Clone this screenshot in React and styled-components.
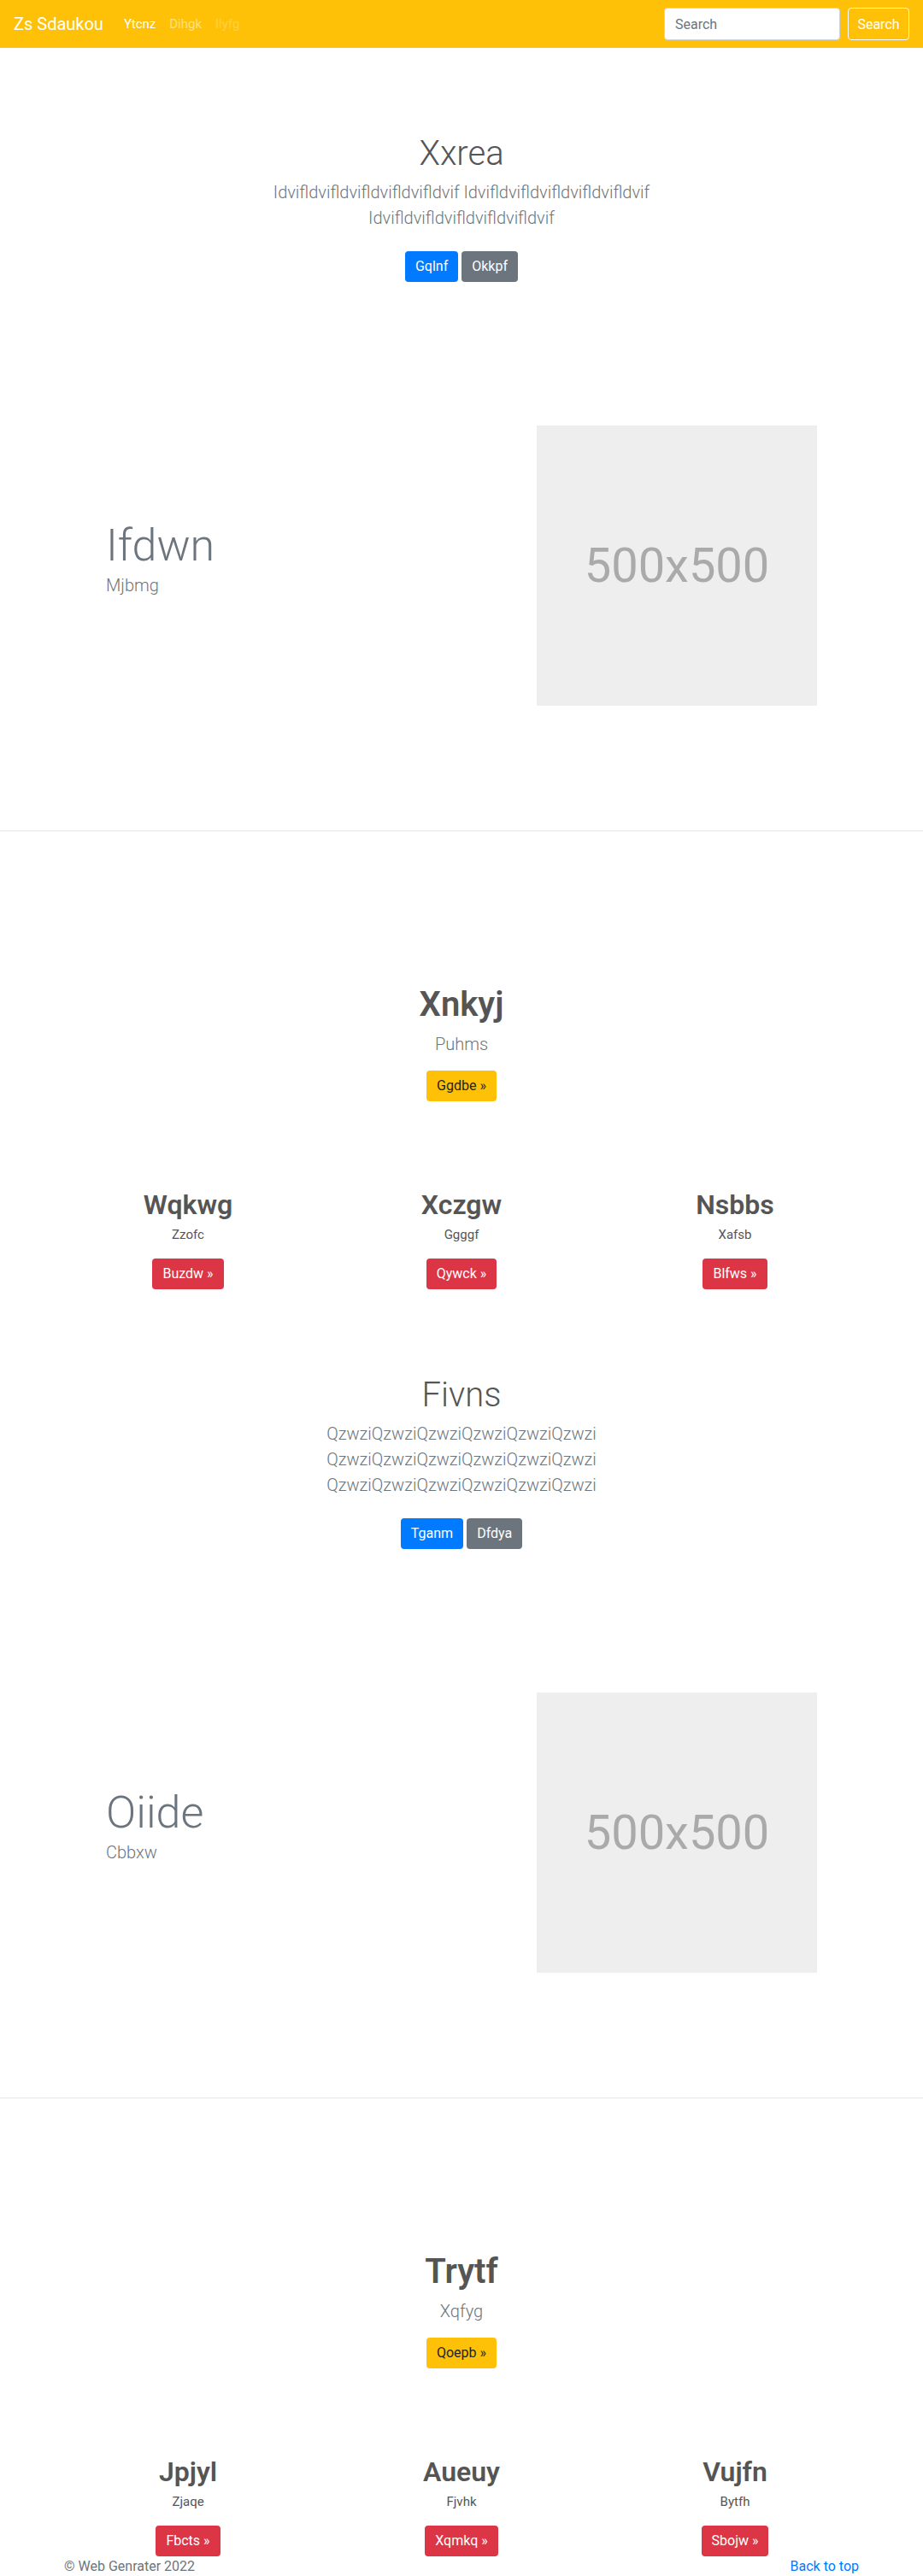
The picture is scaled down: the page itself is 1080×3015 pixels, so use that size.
import React from 'react';
import styled, { createGlobalStyle } from 'styled-components';

const GlobalStyle = createGlobalStyle`
  body {
    margin: 0;
    font-family: Roboto, "Liberation Sans", Arial, sans-serif;
    color: #212529;
    background: #fff;
  }
  * { box-sizing: border-box; }
`;

const colors = {
  primary: '#007bff',
  secondary: '#6c757d',
  warning: '#ffc107',
  danger: '#dc3545',
};

const Nav = styled.nav`
  height: 56px;
  background: #ffc107;
  display: flex;
  align-items: center;
  padding: 0 16px;
`;

const Brand = styled.a`
  font-size: 20px;
  line-height: 30px;
  color: #fff;
  margin-right: 16px;
  text-decoration: none;
`;

const NavLinks = styled.ul`
  display: flex;
  list-style: none;
  margin: 0;
  padding: 0;
  flex: 1;
`;

const NavLink = styled.a`
  display: block;
  padding: 8px;
  font-size: 15px;
  line-height: 24px;
  text-decoration: none;
  color: ${(p) => (p.$state === 'active' ? '#fff' : p.$state === 'disabled' ? 'rgba(255,255,255,.25)' : 'rgba(255,255,255,.5)')};
`;

const SearchForm = styled.form`
  display: flex;
  align-items: center;
  gap: 9px;
`;

const SearchInput = styled.input`
  width: 206px;
  height: 38px;
  padding: 6px 12px;
  font-size: 16px;
  font-family: inherit;
  border: 1px solid #ced4da;
  border-radius: 4px;
  color: #495057;
  &::placeholder { color: #6c757d; }
`;

const OutlineButton = styled.button`
  height: 38px;
  width: 72px;
  font-size: 16px;
  font-family: inherit;
  background: transparent;
  color: #fff;
  border: 1px solid #f8f9fa;
  border-radius: 4px;
`;

const Hero = styled.section`
  padding-top: 100px;
  text-align: center;
`;

const HeroInner = styled.div`
  max-width: 540px;
  margin: 0 auto;
`;

const HeroTitle = styled.h1`
  margin: 0 0 6px;
  font-size: 40px;
  line-height: 48px;
  font-weight: 300;
  color: #555;
`;

const Lead = styled.p`
  margin: 0 0 ${(p) => p.$mb ?? 16}px;
  font-size: 20px;
  line-height: 30px;
  font-weight: 300;
  color: #6c757d;
`;

const ButtonRow = styled.div`
  display: flex;
  justify-content: center;
  gap: 4px;
  margin-top: 24px;
`;

const Button = styled.a`
  display: inline-block;
  padding: 6px 12px;
  font-size: 16px;
  line-height: 24px;
  border-radius: 4px;
  text-decoration: none;
  background: ${(p) => colors[p.$variant]};
  color: ${(p) => (p.$variant === 'warning' ? '#212529' : '#fff')};
`;

const Feature = styled.section`
  display: flex;
  align-items: center;
  justify-content: space-between;
  padding: 168px 124px 146px;
`;

const FeatureText = styled.div``;

const FeatureTitle = styled.h2`
  margin: 0;
  font-size: 52px;
  line-height: 62px;
  font-weight: 300;
  color: #6c757d;
`;

const Placeholder = styled.div`
  width: 328px;
  height: 328px;
  background: #eee;
  color: #aaa;
  font-size: 56px;
  display: flex;
  align-items: center;
  justify-content: center;
`;

const Divider = styled.hr`
  margin: 0;
  border: 0;
  border-top: 1px solid rgba(0, 0, 0, 0.1);
`;

const Marketing = styled.section`
  padding-top: 179px;
  text-align: center;
`;

const MarketTitle = styled.h2`
  margin: 0 0 7px;
  font-size: 40px;
  line-height: 48px;
  font-weight: 600;
  color: #555;
`;

const Columns = styled.div`
  width: 960px;
  margin: 102px auto 0;
  display: grid;
  grid-template-columns: repeat(3, 1fr);
`;

const Column = styled.div`
  padding: 0 15px;
  display: flex;
  flex-direction: column;
  align-items: center;
`;

const ColTitle = styled.h2`
  margin: 0 0 4px;
  font-size: 32px;
  line-height: 38px;
  font-weight: 600;
  color: #555;
`;

const ColText = styled.p`
  margin: 0 0 16px;
  font-size: 15px;
  line-height: 24px;
  color: #555;
`;

const Footer = styled.footer`
  width: 960px;
  margin: 0 auto;
  padding: 0 15px;
  display: flex;
  justify-content: space-between;
  font-size: 16px;
  line-height: 24px;
  color: #6c757d;
`;

const FooterLink = styled.a`
  color: #007bff;
  text-decoration: none;
`;

const blocks = [
  {
    hero: {
      title: 'Xxrea',
      text: 'Idvifldvifldvifldvifldvifldvif Idvifldvifldvifldvifldvifldvif Idvifldvifldvifldvifldvifldvif',
      buttons: ['Gqlnf', 'Okkpf'],
    },
    feature: { title: 'Ifdwn', text: 'Mjbmg' },
    market: {
      title: 'Xnkyj',
      text: 'Puhms',
      button: 'Ggdbe »',
      cols: [
        ['Wqkwg', 'Zzofc', 'Buzdw »'],
        ['Xczgw', 'Ggggf', 'Qywck »'],
        ['Nsbbs', 'Xafsb', 'Blfws »'],
      ],
    },
  },
  {
    hero: {
      title: 'Fivns',
      text: 'QzwziQzwziQzwziQzwziQzwziQzwzi QzwziQzwziQzwziQzwziQzwziQzwzi QzwziQzwziQzwziQzwziQzwziQzwzi',
      buttons: ['Tganm', 'Dfdya'],
    },
    feature: { title: 'Oiide', text: 'Cbbxw' },
    market: {
      title: 'Trytf',
      text: 'Xqfyg',
      button: 'Qoepb »',
      cols: [
        ['Jpjyl', 'Zjaqe', 'Fbcts »'],
        ['Aueuy', 'Fjvhk', 'Xqmkq »'],
        ['Vujfn', 'Bytfh', 'Sbojw »'],
      ],
    },
  },
];

const Block = ({ hero, feature, market }) => (
  <>
    <Hero>
      <HeroInner>
        <HeroTitle>{hero.title}</HeroTitle>
        <Lead $mb={0}>{hero.text}</Lead>
        <ButtonRow>
          <Button href="#" $variant="primary">{hero.buttons[0]}</Button>
          <Button href="#" $variant="secondary">{hero.buttons[1]}</Button>
        </ButtonRow>
      </HeroInner>
    </Hero>
    <Feature>
      <FeatureText>
        <FeatureTitle>{feature.title}</FeatureTitle>
        <Lead>{feature.text}</Lead>
      </FeatureText>
      <Placeholder>500x500</Placeholder>
    </Feature>
    <Divider />
    <Marketing>
      <MarketTitle>{market.title}</MarketTitle>
      <Lead>{market.text}</Lead>
      <Button href="#" $variant="warning">{market.button}</Button>
      <Columns>
        {market.cols.map(([t, s, b]) => (
          <Column key={t}>
            <ColTitle>{t}</ColTitle>
            <ColText>{s}</ColText>
            <Button href="#" $variant="danger">{b}</Button>
          </Column>
        ))}
      </Columns>
    </Marketing>
  </>
);

const App = () => (
  <>
    <GlobalStyle />
    <Nav>
      <Brand href="#">Zs Sdaukou</Brand>
      <NavLinks>
        <li><NavLink href="#" $state="active">Ytcnz</NavLink></li>
        <li><NavLink href="#">Dihgk</NavLink></li>
        <li><NavLink href="#" $state="disabled">Ilyfg</NavLink></li>
      </NavLinks>
      <SearchForm>
        <SearchInput placeholder="Search" />
        <OutlineButton type="button">Search</OutlineButton>
      </SearchForm>
    </Nav>
    {blocks.map((b) => (
      <Block key={b.hero.title} {...b} />
    ))}
    <Footer>
      <span>© Web Genrater 2022</span>
      <FooterLink href="#">Back to top</FooterLink>
    </Footer>
  </>
);

export default App;
